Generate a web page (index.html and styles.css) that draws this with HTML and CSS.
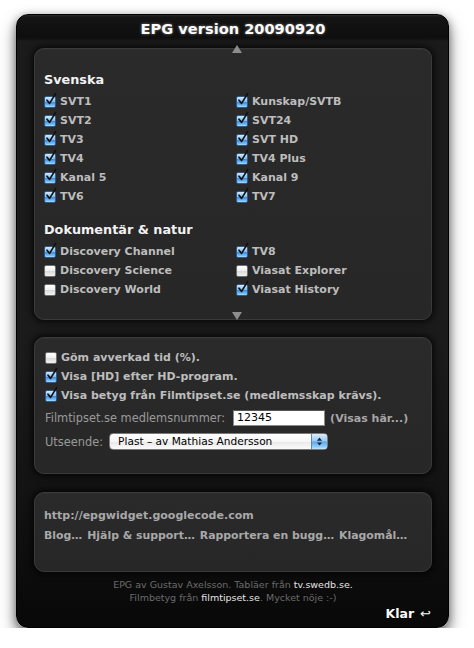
FILE: index.html
```html
<!DOCTYPE html>
<html lang="sv">
<head>
<meta charset="utf-8">
<title>EPG</title>
<link rel="stylesheet" href="styles.css">
</head>
<body>
<div class="stage">
  <div class="window">
    <div class="titlebar">EPG version 20090920</div>

    <section class="panel channels">
      <span class="tri up"></span>
      <h2 class="group">Svenska</h2>
      <div class="grid">
        <label class="row"><span class="cb on"><svg viewBox="0 0 12 14"><path d="M2 7.2 L4.6 10.4 L10.6 0.6"/></svg></span>SVT1</label>
        <label class="row"><span class="cb on"><svg viewBox="0 0 12 14"><path d="M2 7.2 L4.6 10.4 L10.6 0.6"/></svg></span>Kunskap/SVTB</label>
        <label class="row"><span class="cb on"><svg viewBox="0 0 12 14"><path d="M2 7.2 L4.6 10.4 L10.6 0.6"/></svg></span>SVT2</label>
        <label class="row"><span class="cb on"><svg viewBox="0 0 12 14"><path d="M2 7.2 L4.6 10.4 L10.6 0.6"/></svg></span>SVT24</label>
        <label class="row"><span class="cb on"><svg viewBox="0 0 12 14"><path d="M2 7.2 L4.6 10.4 L10.6 0.6"/></svg></span>TV3</label>
        <label class="row"><span class="cb on"><svg viewBox="0 0 12 14"><path d="M2 7.2 L4.6 10.4 L10.6 0.6"/></svg></span>SVT HD</label>
        <label class="row"><span class="cb on"><svg viewBox="0 0 12 14"><path d="M2 7.2 L4.6 10.4 L10.6 0.6"/></svg></span>TV4</label>
        <label class="row"><span class="cb on"><svg viewBox="0 0 12 14"><path d="M2 7.2 L4.6 10.4 L10.6 0.6"/></svg></span>TV4 Plus</label>
        <label class="row"><span class="cb on"><svg viewBox="0 0 12 14"><path d="M2 7.2 L4.6 10.4 L10.6 0.6"/></svg></span>Kanal 5</label>
        <label class="row"><span class="cb on"><svg viewBox="0 0 12 14"><path d="M2 7.2 L4.6 10.4 L10.6 0.6"/></svg></span>Kanal 9</label>
        <label class="row"><span class="cb on"><svg viewBox="0 0 12 14"><path d="M2 7.2 L4.6 10.4 L10.6 0.6"/></svg></span>TV6</label>
        <label class="row"><span class="cb on"><svg viewBox="0 0 12 14"><path d="M2 7.2 L4.6 10.4 L10.6 0.6"/></svg></span>TV7</label>
      </div>
      <h2 class="group second">Dokumentär &amp; natur</h2>
      <div class="grid">
        <label class="row"><span class="cb on"><svg viewBox="0 0 12 14"><path d="M2 7.2 L4.6 10.4 L10.6 0.6"/></svg></span>Discovery Channel</label>
        <label class="row"><span class="cb on"><svg viewBox="0 0 12 14"><path d="M2 7.2 L4.6 10.4 L10.6 0.6"/></svg></span>TV8</label>
        <label class="row"><span class="cb off"></span>Discovery Science</label>
        <label class="row"><span class="cb off"></span>Viasat Explorer</label>
        <label class="row"><span class="cb off"></span>Discovery World</label>
        <label class="row"><span class="cb on"><svg viewBox="0 0 12 14"><path d="M2 7.2 L4.6 10.4 L10.6 0.6"/></svg></span>Viasat History</label>
      </div>
      <span class="tri down"></span>
    </section>

    <section class="panel options">
      <label class="row"><span class="cb off"></span>Göm avverkad tid (%).</label>
      <label class="row"><span class="cb on"><svg viewBox="0 0 12 14"><path d="M2 7.2 L4.6 10.4 L10.6 0.6"/></svg></span>Visa [HD] efter HD-program.</label>
      <label class="row"><span class="cb on"><svg viewBox="0 0 12 14"><path d="M2 7.2 L4.6 10.4 L10.6 0.6"/></svg></span>Visa betyg från Filmtipset.se (medlemsskap krävs).</label>
      <div class="field member">
        <span class="plain">Filmtipset.se medlemsnummer:</span>
        <span class="input">12345</span>
        <span class="hint">(Visas här...)</span>
      </div>
      <div class="field look">
        <span class="plain">Utseende:</span>
        <span class="select">
          <span class="val">Plast – av Mathias Andersson</span>
          <span class="arrows"><svg viewBox="0 0 8 12"><path d="M4 1.5 L7 5 H1 Z M4 10.5 L7 7 H1 Z"/></svg></span>
        </span>
      </div>
    </section>

    <section class="panel links">
      <div class="url">http://epgwidget.googlecode.com</div>
      <div class="linkrow">
        <span>Blog…</span>
        <span>Hjälp &amp; support…</span>
        <span>Rapportera en bugg…</span>
        <span>Klagomål…</span>
      </div>
    </section>

    <footer class="credits">
      <p>EPG av Gustav Axelsson. Tabläer från <b>tv.swedb.se.</b></p>
      <p>Filmbetyg från <b>filmtipset.se</b>. Mycket nöje :-)</p>
    </footer>
    <div class="done"><span>Klar</span><span class="ret">↩</span></div>
  </div>
</div>
</body>
</html>
```

FILE: styles.css
```css
html, body {
  margin: 0;
  padding: 0;
  background: #ffffff;
}

body {
  font-family: "DejaVu Sans", "Noto Sans", sans-serif;
}

.stage {
  padding: 14px 0 0 16px;
}

.window {
  width: 433px;
  height: 614px;
  box-sizing: border-box;
  border: 1px solid #000;
  border-radius: 12px;
  padding: 0 16px 0 17px;
  display: flex;
  flex-direction: column;
  background:
    linear-gradient(to bottom,
      #2a2a2a 0px, #141414 2px, #0e0e0e 22px, #121212 24px,
      #1b1b1b 26px, #1b1b1b 55%, #121212 80%, #080808 100%);
  box-shadow: 0 8px 16px rgba(0, 0, 0, 0.5), 0 2px 8px rgba(0, 0, 0, 0.35);
}

.titlebar {
  height: 27px;
  line-height: 27px;
  text-align: center;
  color: #fafafa;
  font-weight: bold;
  font-size: 14.6px;
  text-shadow: 0 0 3px rgba(255, 255, 255, 0.45);
}

.panel {
  position: relative;
  box-sizing: border-box;
  border: 1px solid #3a3a3a;
  border-radius: 10px;
  background: linear-gradient(to bottom, #2a2a2a, #272727);
  box-shadow: 0 0 7px 2px rgba(0, 0, 0, 0.75), inset 0 1px 0 rgba(255, 255, 255, 0.03);
}

.channels {
  margin-top: 6px;
  height: 272px;
  padding: 22px 0 0 9px;
}

.options {
  margin-top: 17px;
  height: 137px;
  padding: 10px 0 0 10px;
}

.links {
  margin-top: 18px;
  height: 80px;
  padding: 13px 0 0 9px;
}

.tri {
  position: absolute;
  left: 197px;
  width: 0;
  height: 0;
  border-left: 5px solid transparent;
  border-right: 5px solid transparent;
}

.tri.up {
  top: -4px;
  border-bottom: 8px solid #8d8d8d;
}

.tri.down {
  bottom: -1px;
  border-top: 8px solid #8d8d8d;
}

.group {
  margin: 0 0 3px 0;
  height: 18px;
  line-height: 18px;
  font-size: 12.8px;
  font-weight: bold;
  color: #f2f2f2;
}

.group.second {
  margin-top: 15px;
}

.grid {
  display: grid;
  grid-template-columns: 192px 1fr;
}

.row {
  display: flex;
  align-items: center;
  gap: 4px;
  height: 19px;
  font-size: 11px;
  font-weight: bold;
  color: #bdbdbd;
  white-space: nowrap;
}

.cb {
  position: relative;
  flex: none;
  width: 10px;
  height: 10px;
  border-radius: 2px;
}

.cb.on {
  border: 1px solid #2d5a8a;
  background: linear-gradient(to bottom, #d3ebfd 0%, #86c0f0 45%, #3f8fe0 55%, #7fc4fb 90%, #b4e2ff 100%);
}

.cb.off {
  border: 1px solid #6f6f6f;
  background: linear-gradient(to bottom, #ffffff 0%, #eeeeee 50%, #dadada 55%, #f2f2f2 100%);
}

.cb svg {
  position: absolute;
  left: 0px;
  top: -4px;
  width: 12px;
  height: 14px;
  overflow: visible;
}

.cb svg path {
  fill: none;
  stroke: #111;
  stroke-width: 1.7;
  stroke-linecap: round;
  stroke-linejoin: round;
}

.field {
  display: flex;
  align-items: center;
  font-size: 11.4px;
  color: #9a9a9a;
  white-space: nowrap;
}

.member {
  margin-top: 5px;
  height: 16px;
}

.look {
  margin-top: 7px;
  height: 17px;
}

.input {
  box-sizing: border-box;
  margin-left: 8px;
  width: 92px;
  height: 16px;
  line-height: 14px;
  padding-left: 3px;
  font-size: 11px;
  color: #000;
  background: #fff;
  border: 1px solid #8a8a8a;
  border-top-color: #555;
}

.hint {
  margin-left: 5px;
  font-weight: bold;
  font-size: 11px;
  color: #a6a6a6;
}

.select {
  box-sizing: border-box;
  display: flex;
  margin-left: 6px;
  width: 219px;
  height: 17px;
  border: 1px solid #7a7a7a;
  border-radius: 4px;
  overflow: hidden;
  background: linear-gradient(to bottom, #ffffff 0%, #f6f6f6 50%, #e9e9e9 55%, #fbfbfb 100%);
}

.select .val {
  flex: 1;
  padding-left: 8px;
  line-height: 15px;
  font-size: 10.6px;
  color: #000;
}

.select .arrows {
  flex: none;
  width: 15px;
  display: flex;
  align-items: center;
  justify-content: center;
  border-left: 1px solid #5d87b8;
  background: linear-gradient(to bottom, #d9ecfc 0%, #98c9f3 48%, #5aa6ec 52%, #8fcdfb 85%, #c0e6ff 100%);
}

.select .arrows svg {
  width: 7px;
  height: 11px;
}

.select .arrows path {
  fill: #1b2a3a;
}

.url {
  height: 19px;
  line-height: 19px;
  font-size: 11px;
  font-weight: bold;
  color: #a8a8a8;
}

.linkrow {
  margin-top: 1px;
  display: flex;
  gap: 5px;
  height: 19px;
  line-height: 19px;
  font-size: 10.9px;
  font-weight: bold;
  color: #a8a8a8;
  white-space: nowrap;
}

.credits {
  margin-top: 7px;
  text-align: center;
  font-size: 9.5px;
  line-height: 12.5px;
  color: #6b6b6b;
}

.credits p {
  margin: 0;
}

.credits b {
  font-weight: normal;
  color: #e4e4e4;
}

.done {
  display: flex;
  justify-content: flex-end;
  align-items: center;
  gap: 6px;
  margin-top: 1px;
  padding-right: 1px;
  height: 16px;
  color: #fafafa;
  font-weight: bold;
  font-size: 12.5px;
}

.done .ret {
  font-weight: normal;
  font-size: 13px;
}
```
